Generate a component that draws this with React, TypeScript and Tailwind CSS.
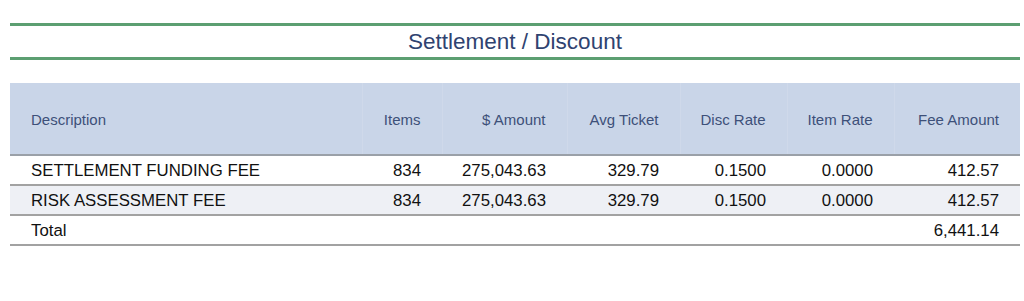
const headers = ['Description', 'Items', '$ Amount', 'Avg Ticket', 'Disc Rate', 'Item Rate', 'Fee Amount']

const rows = [
  ['SETTLEMENT FUNDING FEE', '834', '275,043.63', '329.79', '0.1500', '0.0000', '412.57'],
  ['RISK ASSESSMENT FEE', '834', '275,043.63', '329.79', '0.1500', '0.0000', '412.57'],
]

export default function App() {
  return (
    <div className="w-[1024px] h-[301px] bg-white pt-[23px] px-[10px] font-['Liberation_Sans',Arial,sans-serif]">
      <div className="w-[1010px] border-t-[3px] border-b-[3px] border-[#5c9f71] h-[37px] flex items-center justify-center">
        <h2 className="text-[22.5px] text-[#2f4370] leading-none pt-[2px]">Settlement / Discount</h2>
      </div>

      <table className="mt-[23px] w-[1010px] table-fixed border-collapse">
        <colgroup>
          <col className="w-[352px]" />
          <col className="w-[80px]" />
          <col className="w-[125px]" />
          <col className="w-[113px]" />
          <col className="w-[107px]" />
          <col className="w-[107px]" />
          <col className="w-[126px]" />
        </colgroup>
        <thead>
          <tr className="bg-[#c9d5e8] h-[72px] border-b-2 border-[#9aa0a8]">
            {headers.map((h, i) => (
              <th
                key={h}
                className={
                  i === 0
                    ? 'text-left font-normal text-[15px] text-[#3d5079] pl-[21px] pt-[3px]'
                    : 'text-right font-normal text-[15px] text-[#3d5079] pr-[21px] pt-[3px] border-l border-[#cfd9ea]'
                }
              >
                {h}
              </th>
            ))}
          </tr>
        </thead>
        <tbody>
          {rows.map((r, ri) => (
            <tr key={ri} className={`h-[30px] border-b-2 border-[#a2a2a2] ${ri === 1 ? 'bg-[#eef0f5]' : 'bg-white'}`}>
              {r.map((c, i) => (
                <td
                  key={i}
                  className={i === 0 ? 'text-left text-[16.8px] text-[#111] pl-[21px] pt-[1px]' : 'text-right text-[16.8px] text-[#111] pr-[21px] pt-[1px]'}
                >
                  {c}
                </td>
              ))}
            </tr>
          ))}
          <tr className="h-[30px] border-b-2 border-[#a2a2a2]">
            <td className="text-left text-[16.8px] text-[#111] pl-[21px] pt-[1px]">Total</td>
            <td />
            <td />
            <td />
            <td />
            <td />
            <td className="text-right text-[16.8px] text-[#111] pr-[21px] pt-[1px]">6,441.14</td>
          </tr>
        </tbody>
      </table>
    </div>
  )
}
